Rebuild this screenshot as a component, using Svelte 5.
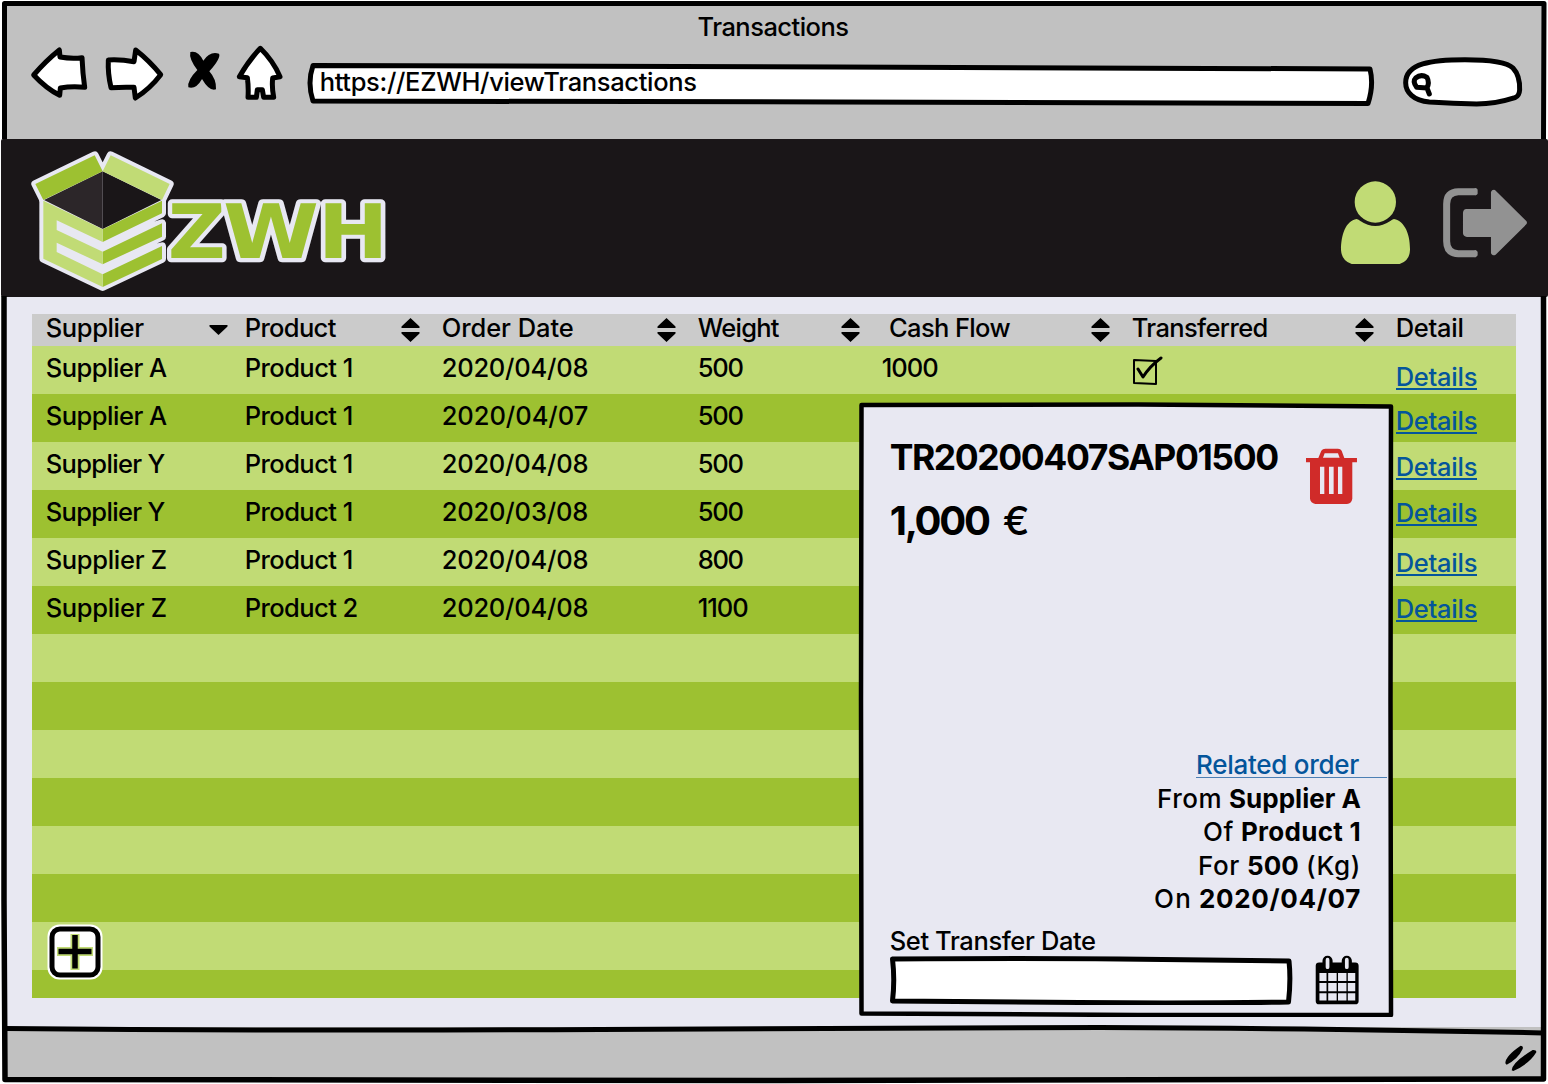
<script>
  const columns = [
    { name: 'Supplier', w: 98, sort: 'down' },
    { name: 'Product', w: 91, sort: 'both' },
    { name: 'Order Date', w: 132, sort: 'both' },
    { name: 'Weight', w: 81, sort: 'both' },
    { name: 'Cash Flow', w: 121, sort: 'both', shift: true },
    { name: 'Transferred', w: 136, sort: 'both' },
    { name: 'Detail', w: 68, sort: '' }
  ];

  // drop = how far the hand-placed link sits below the row's text line
  const rows = [
    { supplier: 'Supplier A', product: 'Product 1', date: '2020/04/08', weight: '500', cash: '1000', done: true, drop: 9 },
    { supplier: 'Supplier A', product: 'Product 1', date: '2020/04/07', weight: '500', drop: 5 },
    { supplier: 'Supplier Y', product: 'Product 1', date: '2020/04/08', weight: '500', drop: 3 },
    { supplier: 'Supplier Y', product: 'Product 1', date: '2020/03/08', weight: '500', drop: 1 },
    { supplier: 'Supplier Z', product: 'Product 1', date: '2020/04/08', weight: '800', drop: 3 },
    { supplier: 'Supplier Z', product: 'Product 2', date: '2020/04/08', weight: '1100', drop: 1 }
  ];
  const blanks = Array.from({ length: 8 });

  const widths = {
    'Supplier A': 121, 'Supplier Y': 119, 'Supplier Z': 121,
    'Product 1': 108, 'Product 2': 113, '500': 45, '800': 45, '1100': 50, '1000': 56
  };

  // Tracks a label so that it fills the given width.
  function fit(node, width) {
    const natural = node.getBoundingClientRect().width;
    node.style.letterSpacing = (width - natural) / node.textContent.length + 'px';
  }
</script>

{#snippet label(text, w)}<span class="fit" use:fit={w}>{text}</span>{/snippet}

<div class="window">
  <header class="chrome">
    <h1>{@render label('Transactions', 151)}</h1>
    <div class="toolbar">
      <svg class="nav" viewBox="90 130 770 180" fill="#fff" stroke="#000" stroke-width="15" stroke-linejoin="round" stroke-linecap="round">
        <path d="M101 226 Q137 184 178 151 L180 172 Q215 178 246 174 Q248 222 254 263 Q216 259 181 265 L179 287 Q138 266 101 226Z" />
        <path d="M325 181 Q363 179 402 186 L407 151 Q449 184 482 225 Q451 266 406 295 L402 263 Q366 262 333 264 Q323 222 325 181Z" />
        <path stroke="none" fill="#000" d="M571 157 Q594 151 610 183 Q630 153 657 162 Q664 174 628 215 Q650 240 648 269 Q628 276 606 238 Q588 270 565 263 Q561 242 592 211 Q566 177 571 157Z" />
        <path d="M781 146 Q819 183 840 231 L818 235 Q815 263 821 293 L791 293 L787 270 L772 270 L769 293 L744 293 Q746 263 742 234 L718 231 Q747 181 781 146Z" />
      </svg>
      <div class="address">
        <svg class="skin" viewBox="0 0 1068 42" fill="#fff" stroke="#000" stroke-width="5" stroke-linejoin="round">
          <path d="M6 2.500 Q300 3 530 4 T1063 6 Q1067 22 1061 40.500 Q800 40 530 39 T6 38 Q0 20 6 2.500Z" />
        </svg>
        {@render label('https://EZWH/viewTransactions', 377)}
      </div>
      <svg class="search" viewBox="336 168 364 156" fill="none" stroke="#000" stroke-width="15" stroke-linecap="round">
        <path fill="#fff" d="M418 306 C370 302 347 276 347 248 C347 190 425 179 525 179 C600 179 653 188 669 204 C684 220 690 245 689 270 Q688 288 675 293 Q616 312 560 312 Q490 310 418 306Z" />
        <path stroke-width="15" stroke-linejoin="round" d="M411 264 L380 262 Q367 244 377 234 Q393 221 411 232 Q419 247 411 264 L418 282" />
      </svg>
    </div>
  </header>

  <div class="banner">
    <svg class="logo" viewBox="0 0 1140 495">
      <g stroke="#e8e8f2" stroke-width="24" stroke-linejoin="round" fill="#e8e8f2">
        <path d="M70 180 L248 94 L426 180 L426 220 L248 306 L426 250 L426 290 L300 350 L426 319 L426 357 L248 441 L70 356Z" />
        <path d="M46 132 L224 46 L248 94 L70 180Z M272 46 L449 132 L426 180 L248 94Z" />
      </g>
      <path fill="#1a1618" d="M248 94 L424 180 L248 267Z" />
      <path fill="#2c2629" d="M248 94 L72 180 L248 267Z" />
      <path fill="#9dc131" d="M46 132 L224 46 L248 94 L70 180Z M426 182 V220 L248 306 V268Z M426 250 V290 L248 373 V335Z M426 318 V357 L248 441 V403Z" />
      <path fill="#c1db75" d="M272 46 L449 132 L426 180 L248 94Z M70 182 L248 268 V306 L110 241 V270 L248 335 V373 L110 308 V336 L248 403 V441 L70 356Z" />
      <g class="brand" stroke="#e8e8f2" stroke-width="25" stroke-linejoin="round" paint-order="stroke" fill="#9dc131">
        <text x="443" y="354" textLength="174" lengthAdjust="spacingAndGlyphs">Z</text>
        <text x="609" y="354" textLength="288" lengthAdjust="spacingAndGlyphs">W</text>
        <text x="893" y="354" textLength="212" lengthAdjust="spacingAndGlyphs">H</text>
      </g>
    </svg>
    <svg class="account" viewBox="60 60 568 255">
      <circle cx="166" cy="126" r="62" fill="#c1db75" />
      <path fill="#c1db75" d="M110 177 Q116 178 121 183 Q166 213 211 183 Q216 178 222 177 C256 184 271 226 270 270 Q269 303 239 312 H95 Q65 303 63 270 C63 225 77 182 110 177Z" />
      <path fill="none" stroke="#929292" stroke-width="21" stroke-linejoin="round" d="M468 95 H415 Q380 96 380 132 V244 Q380 280 415 281 H468" />
      <path fill="#929292" d="M464 84 Q473 84 473 90 V101 Q472 105 466 106Z M464 270 Q473 271 473 276 V286 Q472 291 464 292Z M439 147 H513 V96 Q516 88 525 90 L619 183 Q623 188 619 193 L527 284 Q517 289 513 280 V231 H441 Q430 230 429 220 V158 Q430 148 439 147Z" />
    </svg>
  </div>

  <main>
    <div class="table">
      <div class="row head">
        {#each columns as col}
          <div class="cell" class:shift={col.shift}>
            {@render label(col.name, col.w)}
            {#if col.sort}
              <svg class="sort" class:single={col.sort === 'down'} viewBox="0 0 19 24">
                {#if col.sort === 'both'}
                  <path d="M9.500 0 L18.500 8.500 V10 H0.500 V8.500Z M0.500 14 H18.500 V15.500 L9.500 24 L0.500 15.500Z" />
                {:else}
                  <path d="M0.500 8 H18.500 V9.500 L9.500 18 L0.500 9.500Z" />
                {/if}
              </svg>
            {/if}
          </div>
        {/each}
      </div>
      {#each rows as row}
        <div class="row">
          <div class="cell">{@render label(row.supplier, widths[row.supplier])}</div>
          <div class="cell">{@render label(row.product, widths[row.product])}</div>
          <div class="cell">{@render label(row.date, 146.5)}</div>
          <div class="cell">{@render label(row.weight, widths[row.weight])}</div>
          <div class="cell">{#if row.cash}{@render label(row.cash, widths[row.cash])}{/if}</div>
          <div class="cell">
            {#if row.done}
              <svg class="check" viewBox="0 0 32 30" fill="none" stroke="#000" stroke-width="2" stroke-linecap="round" stroke-linejoin="round">
                <path d="M2 4 L24 5 L24 28 L2 27Z" />
                <path stroke-width="3" d="M6 13 L11 21 Q18 10 29 2" />
              </svg>
            {/if}
          </div>
          <div class="cell"><a href="#details" style:--drop="{row.drop}px">{@render label('Details', 81.5)}</a></div>
        </div>
      {/each}
      {#each blanks as _}
        <div class="row"></div>
      {/each}
    </div>
  </main>

  <footer>
    <svg class="grip" viewBox="372 164 100 84">
      <path d="M376 222 Q376 200 422 169 Q431 169 428 179 Q414 209 380 226Z M395 243 Q396 220 458 182 Q471 181 469 189 Q448 224 400 245Z" />
    </svg>
  </footer>

  <svg class="outline" viewBox="0 0 1548 1084" fill="none" stroke="#000" stroke-linejoin="round">
    <path stroke-width="5" d="M4.500 139 V3.500 H1544 L1543.500 139" />
    <path stroke-width="5.500" d="M4 296 V900 L5 1079.500 L780 1080.500 L1543.500 1079 L1544 700 L1543.500 296" />
    <path stroke-width="5" d="M6 1028.500 Q300 1031 600 1029.500 T1100 1027.500 Q1350 1028.500 1543 1033" />
  </svg>

  <button class="add" aria-label="Add">
    <svg viewBox="0 0 56 56">
      <rect x="0.500" y="0.500" width="55" height="55" rx="12" fill="#fff" />
      <rect x="5" y="5" width="46" height="46" rx="8" fill="#fff" stroke="#000" stroke-width="5" />
      <path stroke="#c1db75" stroke-width="9" stroke-linejoin="round" d="M28 10 V46 M10 27.500 H46" />
      <path stroke="#000" stroke-width="5.500" d="M28 11 V44.500 M11.500 27.500 H44.500" />
    </svg>
  </button>

  <section class="dialog">
    <svg class="skin" viewBox="0 0 536 616" fill="#e8e8f2" stroke="#000" stroke-width="4.500" stroke-linejoin="round">
      <path d="M3.500 4 L280 3.500 L533 5.500 L532.500 300 L533 614 L280 614 L3.500 612.500 L3 300Z" />
    </svg>
    <div class="top">
      <div>
        <h2>{@render label('TR20200407SAP01500', 388)}</h2>
        <p class="amount"><b>{@render label('1,000', 99)}</b>{@render label('€', 28)}</p>
      </div>
      <svg class="trash" viewBox="48 54 154 170" fill="#d02b29">
        <path fill-rule="evenodd" d="M48 84 H85 L94 62 Q98 56 106 56 H144 Q152 56 155 62 L163 84 H201 V97 H187 V206 Q185 220 171 222 H76 Q62 219 60 206 V97 H48Z M99 83 H149 L144 70 H104Z M90 110 V192 H103 V110Z M117 110 V192 H131 V110Z M144 110 V192 H157 V110Z" />
      </svg>
    </div>
    <div class="facts">
      <p class="related"><a href="#order">{@render label('Related order', 163)}</a></p>
      <p>{@render label('From', 65)}<b>{@render label('Supplier A', 132)}</b></p>
      <p>{@render label('Of', 31)}<b>{@render label('Product 1', 120)}</b></p>
      <p>{@render label('For', 42)}<b>{@render label('500', 52)}</b>{@render label('(Kg)', 55)}</p>
      <p>{@render label('On', 38)}<b>{@render label('2020/04/07', 162)}</b></p>
    </div>
    <div class="transfer">
      <div class="caption">{@render label('Set Transfer Date', 206)}</div>
      <div class="entry">
        <svg class="field" viewBox="0 0 404 50" fill="#fff" stroke="#000" stroke-width="5" stroke-linejoin="round">
          <path d="M3.500 4 Q140 3 230 4 T400 6 Q402 25 399.500 47 Q300 48.500 190 47.500 T3.500 46 Q6 25 3.500 4Z" />
        </svg>
        <svg class="calendar" viewBox="1300 649 128 148">
          <rect x="1301" y="671" width="127" height="124" rx="10" />
          <path fill="none" stroke="#000" stroke-width="30" stroke-linecap="round" d="M1336 666 V680 M1393 666 V680" />
          <path fill="none" stroke="#e8e8f2" stroke-width="11" stroke-linecap="round" d="M1336 663 V685 M1393 663 V685" />
          <path fill="#e8e8f2" d="M1312 702h21v24h-21z M1338 702h25v24h-25z M1367 702h25v24h-25z M1396 702h22v24h-22z M1312 732h21v24h-21z M1338 732h25v24h-25z M1367 732h25v24h-25z M1396 732h22v24h-22z M1312 762h21v22h-21z M1338 762h25v22h-25z M1367 762h25v22h-25z M1396 762h22v22h-22z" />
        </svg>
      </div>
    </div>
  </section>
</div>

<style>
  :global(body) { margin: 0; background: #fff; }
  h1, h2, p { margin: 0; font-weight: inherit; font-size: inherit; }
  svg { display: block; flex: none; }
  a { color: #04559b; text-decoration: none; }
  .window {
    position: relative; width: 1548px; height: 1084px; overflow: hidden;
    display: flex; flex-direction: column;
    font: 25.500px/30px Inter, "Liberation Sans", sans-serif; font-weight: 450; color: #000;
  }
  .fit { display: inline-block; white-space: nowrap; }
  .chrome { height: 135px; margin: 4px 4px 0; background: #c1c1c1; flex: none; }
  h1 { display: flex; justify-content: center; padding-top: 8px; height: 30px; width: 1538px; }
  .toolbar { display: flex; align-items: flex-start; padding-left: 26px; height: 70px; }
  .nav { width: 256.700px; height: 60px; margin-top: 1.300px; }
  .address { position: relative; width: 1056px; height: 42px; margin: 20.500px 0 0 33px; display: flex; align-items: center; }
  .address .fit { position: relative; margin-top: -4px; }
  .address .skin { position: absolute; left: -13px; top: 0; width: 1068px; height: 42px; overflow: visible; }
  .search { width: 121.300px; height: 52px; margin: 14px 0 0 26.200px; }

  .banner {
    height: 157.500px; flex: none; margin-left: 1px; background: #1a1618;
    display: flex; justify-content: space-between; align-items: flex-start;
    border-radius: 2px;
  }
  .logo { width: 380px; height: 165px; margin: 1px 0 -8px 19px; overflow: visible; }
  .brand { font: bold 226px "DejaVu Sans", sans-serif; }
  .account { width: 189.300px; height: 85px; margin: 41px 18.700px 0 0; }

  main { flex: 1; min-height: 0; margin: 0 4px; padding: 17.500px 28px 0; background: #e8e8f2; }
  .table { width: 1484px; height: 684px; overflow: hidden; }
  .row {
    display: grid; grid-template-columns: 199px 197px 256px 184px 250px 264px 134px;
    height: 48px; background: #c1db75;
  }
  .row:nth-child(odd) { background: #9dc131; }
  .row.head { height: 32px; background: #cbcbcb; }
  .cell { display: flex; justify-content: space-between; align-items: flex-start; padding: 7px 8.500px 0 13.700px; }
  .head .cell { padding-top: 0; line-height: 28px; }
  .cell.shift { padding-left: 21px; }
  .sort { width: 19px; height: 24px; margin-top: 4px; }
  .sort.single { margin: 3px -5px 0 0; }
  .check { width: 32px; height: 30px; margin: 3px 0 0; }
  .cell a { height: 26px; margin-top: var(--drop); border-bottom: 2px solid; line-height: 29px; }

  footer {
    height: 52px; flex: none; margin: 0 4px 5px; background: #c1c1c1;
    display: flex; justify-content: flex-end; align-items: flex-start;
  }
  .grip { width: 33.300px; height: 28px; margin: 17px 7px 0 0; }
  .outline { position: absolute; inset: 0; width: 1548px; height: 1084px; pointer-events: none; }

  .add { position: absolute; left: 47px; top: 924px; border: 0; padding: 0; background: none; }
  .add svg { width: 56px; height: 56px; }

  .dialog {
    position: absolute; left: 858px; top: 401px; width: 536px; height: 616px; box-sizing: border-box;
    padding: 35px 33px 0 31.700px; display: flex; flex-direction: column;
  }
  .dialog > .skin { position: absolute; left: 0; top: 0; width: 536px; height: 616px; }
  .dialog > div { position: relative; }
  .top { display: flex; justify-content: space-between; height: 312px; }
  h2 { font-size: 35.500px; font-weight: 700; line-height: 44px; }
  .amount { display: flex; gap: 14px; font-size: 40px; line-height: 44px; padding-top: 19px; }
  .trash { width: 51.300px; height: 56.700px; margin: 11.500px 4px 0 0; }
  .facts { display: flex; flex-direction: column; align-items: flex-end; font-size: 26px; }
  .facts p { display: flex; gap: 7px; height: 33.500px; line-height: 34px; }
  .facts .related { margin-right: -26px; }
  .related a { height: 28.500px; border-bottom: 1px solid #4c7fb4; padding-right: 28px; line-height: 34px; }
  b { font-weight: 750; }
  .transfer { margin-top: 10px; }
  .entry { display: flex; align-items: flex-start; }
  .field { width: 404px; height: 50px; margin: -1px 0 0 -1px; }
  .calendar { width: 46px; height: 50px; margin: -0.500px 0 0 21px; }
</style>
